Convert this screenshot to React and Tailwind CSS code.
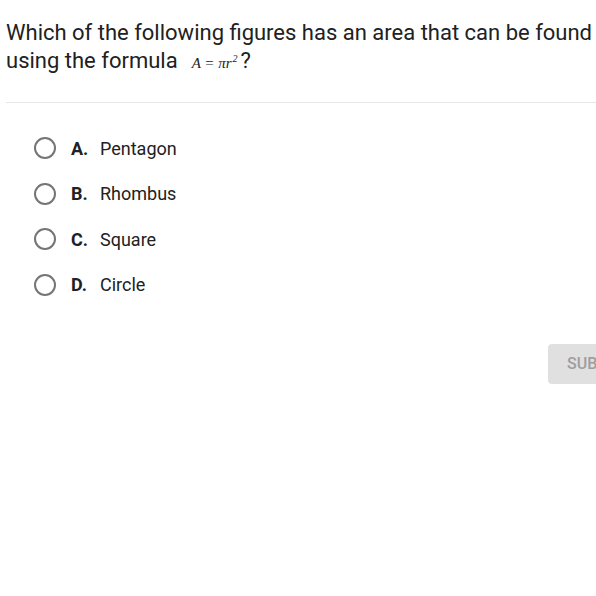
import React from "react";

const options = [
  { letter: "A.", text: "Pentagon" },
  { letter: "B.", text: "Rhombus" },
  { letter: "C.", text: "Square" },
  { letter: "D.", text: "Circle" },
];

// Unchecked radio, grey ring
const Radio = () => (
  <span className="block w-[22px] h-[22px] rounded-full border-2 border-[#757575] shrink-0" />
);

export default function App() {
  return (
    <div
      className="w-[596px] h-[596px] bg-white overflow-hidden text-[#212121]"
      style={{ fontFamily: "Roboto, 'Liberation Sans', sans-serif" }}
    >
      <div className="pt-[19px] pl-[6px]">
        <p className="text-[22px] leading-[28px] whitespace-nowrap">
          Which of the following figures has an area that can be found
          <br />
          using the formula
          <span
            className="italic text-[15px] ml-[14px] mr-[3px]"
            style={{ fontFamily: "'Liberation Serif', serif" }}
          >
            A = πr<span className="relative -top-[6px] text-[10px] ml-[1px]">2</span>
          </span>
          ?
        </p>
      </div>

      <div className="mt-[23px] ml-[6px] h-px bg-[#e6e6e6]" />

      <ul className="pt-[34px] pl-[34px] flex flex-col gap-[23.6px]">
        {options.map((o) => (
          <li key={o.letter} className="flex items-center h-[22px]">
            <Radio />
            <span className="ml-[15px] w-[29px] text-[18px] font-bold">{o.letter}</span>
            <span className="text-[18px]">{o.text}</span>
          </li>
        ))}
      </ul>

      <div className="mt-[48px] flex">
        <button className="ml-[548px] shrink-0 h-[40px] px-[19px] rounded-[4px] bg-[#e0e0e0] text-[#9e9e9e] text-[16px] font-medium">
          SUBMIT
        </button>
      </div>
    </div>
  );
}
